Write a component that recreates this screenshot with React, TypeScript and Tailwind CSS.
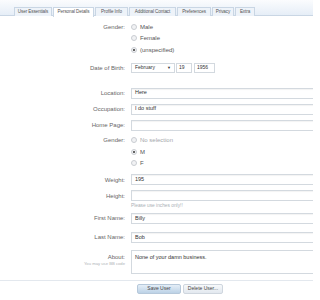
import React from "react";

const tabs = [
  { label: "User Essentials", w: "w-[38px]" },
  { label: "Personal Details", w: "w-[41px]", active: true },
  { label: "Profile Info", w: "w-[33px]" },
  { label: "Additional Contact", w: "w-[47px]" },
  { label: "Preferences", w: "w-[34px]" },
  { label: "Privacy", w: "w-[22px]" },
  { label: "Extra", w: "w-[20px]" },
];

function Radio({ label, checked, muted }: { label: string; checked?: boolean; muted?: boolean }) {
  return (
    <div className="flex h-[11.5px] items-center gap-[3px]">
      <span className="flex h-[6px] w-[6px] items-center justify-center rounded-full border border-[#c9cdd2] bg-[#f1f2f4]">
        {checked ? <span className="h-[2.5px] w-[2.5px] rounded-full bg-[#333]" /> : null}
      </span>
      <span className={muted ? "text-[#a3a7ab]" : "text-[#555]"}>{label}</span>
    </div>
  );
}

function Label({ children }: { children: React.ReactNode }) {
  return <div className="w-[131px] shrink-0 pr-[6px] text-right text-[#666]">{children}</div>;
}

function TextInput({ value }: { value?: string }) {
  return (
    <div className="flex h-[11px] w-[190px] shrink-0 items-center border border-[#d3d9df] bg-white px-[3px] text-[5.5px] text-[#333] shadow-[inset_0_1px_1px_rgba(0,0,0,0.05)]">
      {value}
    </div>
  );
}

function FieldRow({ label, value, className = "" }: { label: string; value?: string; className?: string }) {
  return (
    <div className={`flex items-center ${className}`}>
      <Label>{label}</Label>
      <TextInput value={value} />
    </div>
  );
}

export default function App() {
  return (
    <div
      className="relative h-[300px] w-[313px] overflow-hidden bg-white text-[6px] leading-none"
      style={{ fontFamily: '"Liberation Sans", Arial, sans-serif' }}
    >
      {/* tab bar */}
      <div className="h-[16px] border-b border-[#c9d6e4] bg-gradient-to-b from-[#fbfcfe] to-[#e6eef7] pl-[14px] pt-[7px]">
        <div className="flex h-[9px] items-stretch gap-[1px]">
          {tabs.map((t) => (
            <div
              key={t.label}
              className={`${t.w} flex items-center justify-center whitespace-nowrap border border-b-0 border-[#c9d6e4] text-[4.6px] tracking-[-0.1px] text-[#555] ${
                t.active ? "h-[10px] bg-white" : "bg-[#eef3f9]"
              }`}
            >
              {t.label}
            </div>
          ))}
        </div>
      </div>

      {/* gender */}
      <div className="mt-[5px] flex items-start">
        <Label>
          <div className="flex h-[11.5px] items-center justify-end">Gender:</div>
        </Label>
        <div className="flex flex-col">
          <Radio label="Male" />
          <Radio label="Female" />
          <Radio label="(unspecified)" checked />
        </div>
      </div>

      {/* date of birth */}
      <div className="mt-[7px] flex items-center">
        <Label>Date of Birth:</Label>
        <div className="flex items-center gap-[1px]">
          <div className="flex h-[10px] w-[44px] items-center justify-between border border-[#d3d9df] bg-white px-[3px] text-[5px] text-[#333]">
            <span>February</span>
            <span className="text-[4px]">▼</span>
          </div>
          <div className="flex h-[10px] w-[16px] items-center border border-[#d3d9df] bg-white px-[2px] text-[5px] text-[#333]">19</div>
          <div className="ml-[1px] flex h-[10px] w-[21px] items-center border border-[#d3d9df] bg-white px-[2px] text-[5px] text-[#333]">1956</div>
        </div>
      </div>

      <FieldRow label="Location:" value="Here" className="mt-[15px]" />
      <FieldRow label="Occupation:" value="I do stuff" className="mt-[5px]" />
      <FieldRow label="Home Page:" className="mt-[5px]" />

      {/* second gender */}
      <div className="mt-[4px] flex items-start">
        <Label>
          <div className="flex h-[11.5px] items-center justify-end">Gender:</div>
        </Label>
        <div className="flex flex-col">
          <Radio label="No selection" muted />
          <Radio label="M" checked />
          <Radio label="F" />
        </div>
      </div>

      <FieldRow label="Weight:" value="195" className="mt-[5px]" />
      <div className="mt-[5px] flex items-start">
        <Label>
          <div className="flex h-[11px] items-center justify-end">Height:</div>
        </Label>
        <div>
          <TextInput />
          <div className="mt-[3px] text-[4.8px] text-[#aab0b6]">Please use inches only!!</div>
        </div>
      </div>
      <FieldRow label="First Name:" value="Billy" className="mt-[4px]" />
      <FieldRow label="Last Name:" value="Bob" className="mt-[8px]" />

      {/* about */}
      <div className="mt-[7px] flex items-start">
        <div className="w-[131px] shrink-0 pr-[6px] pt-[4px] text-right">
          <div className="text-[#666]">About:</div>
          <div className="mt-[2px] text-[4.2px] text-[#b0b4b8]">You may use BB code</div>
        </div>
        <div className="h-[24px] w-[190px] shrink-0 border border-[#d3d9df] bg-white px-[3px] pt-[4px] text-[5.5px] text-[#333]">
          None of your damn business.
        </div>
      </div>

      {/* footer */}
      <div className="mt-[6px] border-t border-[#e3e8ee] pl-[137px] pt-[3px]">
        <div className="flex gap-[2px]">
          <div className="flex h-[10px] w-[44px] items-center justify-center rounded-[2px] border border-[#b6c8da] bg-gradient-to-b from-[#e4eef7] to-[#bcd2e6] text-[5px] text-[#444]">
            Save User
          </div>
          <div className="flex h-[10px] w-[40px] items-center justify-center rounded-[2px] border border-[#cfd6de] bg-gradient-to-b from-[#f7f9fb] to-[#e2e8ef] text-[5px] text-[#444]">
            Delete User...
          </div>
        </div>
      </div>
    </div>
  );
}
